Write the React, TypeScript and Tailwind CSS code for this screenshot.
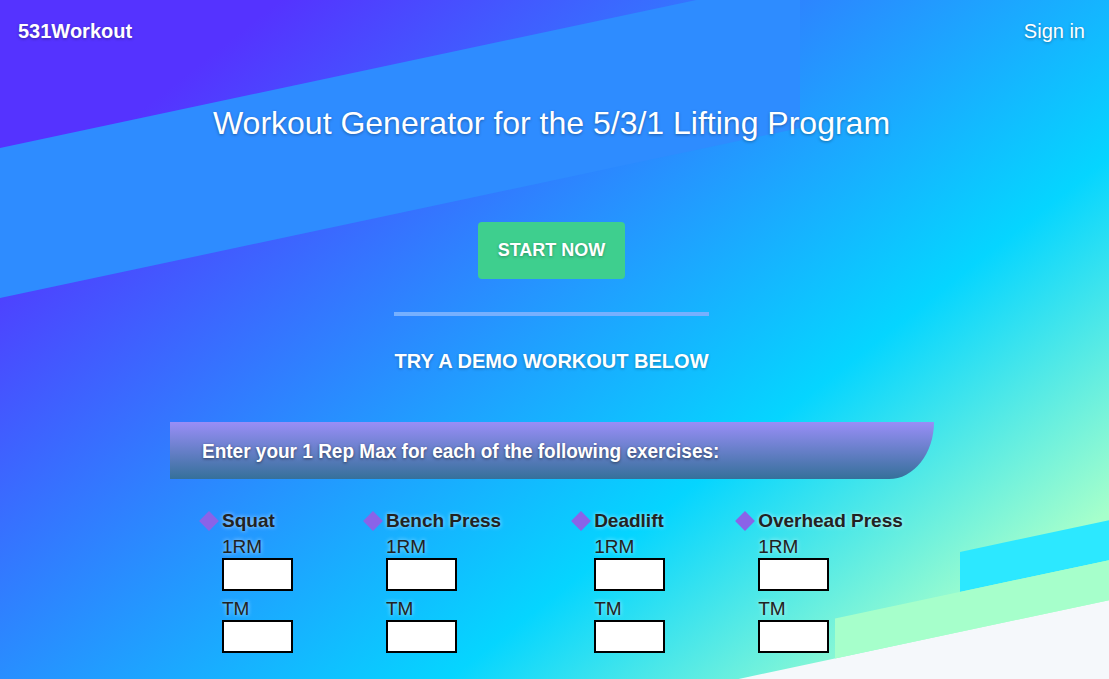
import React from "react";

const exercises = ["Squat", "Bench Press", "Deadlift", "Overhead Press"];

function Exercise({ name }: { name: string }) {
  return (
    <div className="flex flex-col">
      <div className="flex items-center h-[23px]">
        <span className="block w-[14px] h-[14px] ml-[3px] rotate-45 bg-[#8a63e8]" />
        <span className="ml-[6px] text-[19px] leading-[22px] font-bold text-[#222] [text-shadow:0_0_4px_rgba(255,255,255,0.7)] whitespace-nowrap">
          {name}
        </span>
      </div>
      <div className="pl-[23px] flex flex-col">
        <span className="mt-[4px] text-[19px] leading-[22px] text-[#222] [text-shadow:0_0_4px_rgba(255,255,255,0.7)]">1RM</span>
        <input type="text" className="block w-[71px] h-[33px] border-2 border-black bg-white outline-none" />
        <span className="mt-[7px] text-[19px] leading-[22px] text-[#222] [text-shadow:0_0_4px_rgba(255,255,255,0.7)]">TM</span>
        <input type="text" className="block w-[71px] h-[33px] border-2 border-black bg-white outline-none" />
      </div>
    </div>
  );
}

export default function App() {
  return (
    <div className="relative w-full h-[679px] overflow-hidden bg-[#f5f8fb] font-['Liberation_Sans',Arial,sans-serif]">
      {/* skewed gradient background */}
      <div className="absolute top-0 left-0 w-full h-[836px] origin-top-left -skew-y-12 bg-[linear-gradient(150deg,#53f_15%,#05d5ff_70%,#a6ffcb_94%)]">
        <span className="absolute left-0 top-[148px] w-[800px] h-[150px] bg-[#2e8cff]" />
        <span className="absolute left-[960px] right-0 top-[756px] h-[40px] bg-[#2ce8ff]" />
        <span className="absolute left-[835px] right-0 top-[796px] h-[40px] bg-[#a6ffcb]" />
      </div>

      <div className="relative z-10">
        <header className="h-[62px] flex items-center justify-between pl-[18px] pr-[24px] text-white text-[20px] [text-shadow:0_1px_3px_rgba(0,0,0,0.35)]">
          <span className="font-bold">531Workout</span>
          <span>Sign in</span>
        </header>

        <div className="pr-[6px]">
          <h1 className="mt-[43px] text-center text-white text-[32px] leading-[37px] [text-shadow:0_1px_3px_rgba(0,0,0,0.35)]">
            Workout Generator for the 5/3/1 Lifting Program
          </h1>

          <div className="mt-[80px] flex justify-center">
            <button className="h-[57px] px-[20px] rounded-[4px] bg-[#3ecf8e] text-white font-bold text-[18px] [text-shadow:0_1px_3px_rgba(0,0,0,0.3)]">
              START NOW
            </button>
          </div>

          <div className="mt-[33px] mx-auto w-[315px] h-[4px] bg-[#76b0ff]" />

          <p className="mt-[33px] text-center text-white font-bold text-[20px] leading-[24px] [text-shadow:0_1px_3px_rgba(0,0,0,0.3)]">
            TRY A DEMO WORKOUT BELOW
          </p>
        </div>

        <div className="ml-[170px] mt-[49px]">
          <div className="w-[764px] h-[57px] flex items-center pl-[32px] rounded-br-[45px_57px] bg-[linear-gradient(to_bottom,#998ef7,#35709a)]">
            <span className="inline-block origin-left scale-x-[0.95] text-white font-bold text-[20px] whitespace-nowrap [text-shadow:0_1px_3px_rgba(0,0,0,0.5)]">
              Enter your 1 Rep Max for each of the following exercises:
            </span>
          </div>

          <div className="mt-[30px] pl-[29px] flex gap-[70px]">
            {exercises.map((e) => (
              <Exercise key={e} name={e} />
            ))}
          </div>
        </div>
      </div>
    </div>
  );
}
